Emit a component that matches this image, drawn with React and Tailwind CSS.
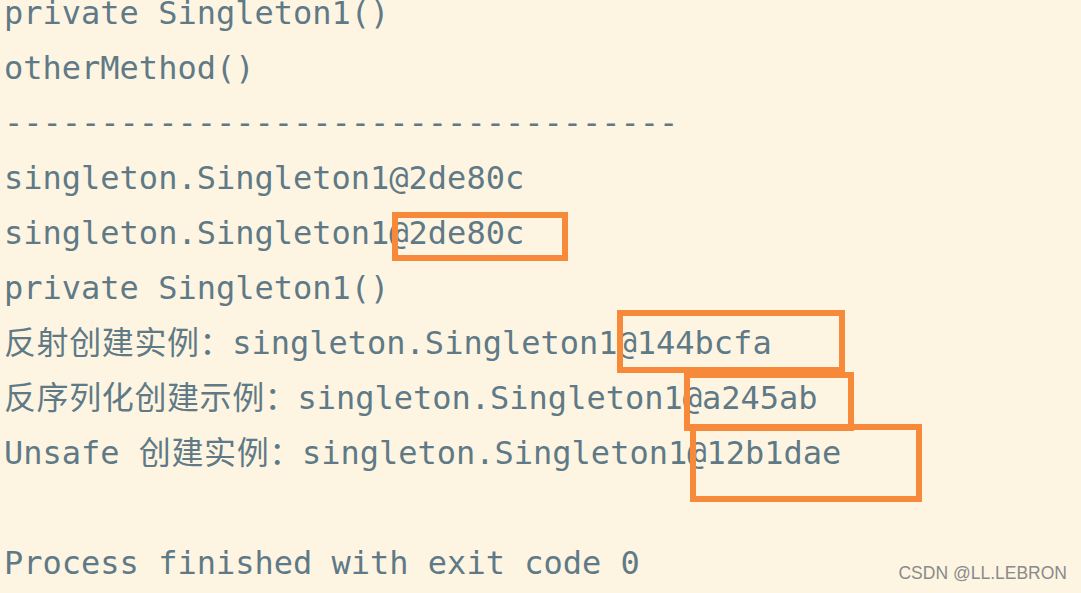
import React from "react";

const lines = [
  "private Singleton1()",
  "otherMethod()",
  "-----------------------------------",
  "singleton.Singleton1@2de80c",
  "singleton.Singleton1@2de80c",
  "private Singleton1()",
  "反射创建实例：singleton.Singleton1@144bcfa",
  "反序列化创建示例：singleton.Singleton1@a245ab",
  "Unsafe 创建实例：singleton.Singleton1@12b1dae",
  "",
  "Process finished with exit code 0",
];

// orange highlight boxes drawn over the console output
const boxes = [
  "left-[392px] top-[212px] w-[176px] h-[49px]",
  "left-[617px] top-[310px] w-[228px] h-[63px]",
  "left-[684px] top-[372px] w-[170px] h-[59px]",
  "left-[690px] top-[424px] w-[232px] h-[78px]",
];

// split a line so CJK runs get a touch of extra spacing
const renderLine = (line) =>
  line.split(/([\u3000-\u9fff\uff00-\uffef]+)/).map((part, i) =>
    /[\u3000-\u9fff\uff00-\uffef]/.test(part) ? (
      <span key={i} className="tracking-[0.6px]">
        {part}
      </span>
    ) : (
      <span key={i}>{part}</span>
    )
  );

const App = () => {
  return (
    <div className="relative w-[1081px] h-[593px] overflow-hidden bg-[#fdf5e2]">
      {/* Console output */}
      <div
        className="flex flex-col -mt-[14px] pl-[4px] text-[32px] text-[#5f7a86] whitespace-pre"
        style={{ fontFamily: '"DejaVu Sans Mono", "Noto Sans CJK SC", monospace' }}
      >
        {lines.map((line, i) => (
          <div key={i} className="h-[55px] leading-[55px]">
            {renderLine(line)}
          </div>
        ))}
      </div>

      {/* Highlight boxes */}
      {boxes.map((b, i) => (
        <div key={i} className={`absolute border-[6px] border-[#f68a3a] ${b}`} />
      ))}

      {/* Watermark */}
      <div
        className="absolute right-[14px] bottom-[7px] text-[17.5px] text-[#8a8a8a]"
        style={{ fontFamily: '"Liberation Sans", Arial, sans-serif' }}
      >
        CSDN @LL.LEBRON
      </div>
    </div>
  );
};

export default App;
